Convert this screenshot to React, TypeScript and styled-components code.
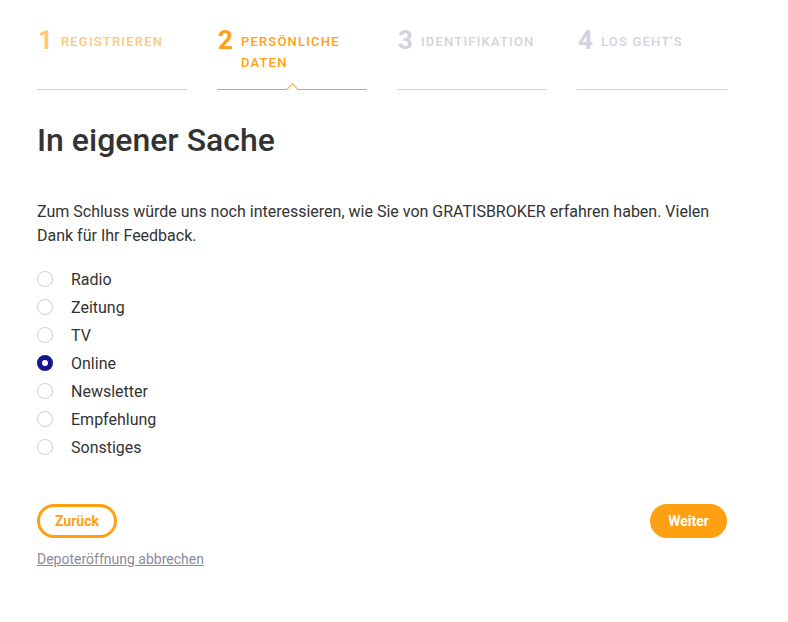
import React from "react";
import styled, { createGlobalStyle } from "styled-components";

const Global = createGlobalStyle`
  html, body { margin: 0; padding: 0; background: #fff; }
  body { font-family: Roboto, "Liberation Sans", Arial, sans-serif; color: #333; }
  * { box-sizing: border-box; }
`;

const Page = styled.div`
  width: 690px;
  margin-left: 37px;
  padding-top: 25px;
`;

const Steps = styled.div`
  display: grid;
  grid-template-columns: repeat(4, 150px);
  column-gap: 30px;
`;

type StepState = "done" | "active" | "todo";
const colorOf = (s: StepState) =>
  s === "active" ? "#ffa012" : s === "done" ? "#fcc978" : "#d4d2de";
const lineOf = (s: StepState) =>
  s === "active" ? "#ffa012" : s === "done" ? "#fcc978" : "#d4d2e0";

const Step = styled.div<{ $s: StepState }>`
  position: relative;
  display: flex;
  align-items: flex-start;
  gap: 8px;
  padding-bottom: 16px;
  border-bottom: 1px solid ${(p) => lineOf(p.$s)};
  color: ${(p) => colorOf(p.$s)};
`;

const Num = styled.span`
  font-size: 26px;
  font-weight: 700;
  line-height: 26px;
  flex: none;
  margin-top: 2px;
  margin-left: 1px;
`;

const Label = styled.span`
  font-size: 13px;
  font-weight: 500;
  letter-spacing: 1.2px;
  text-transform: uppercase;
  line-height: 21px;
  padding-top: 6px;
`;

const Caret = styled.span`
  position: absolute;
  left: 50%;
  bottom: -1px;
  width: 12px;
  height: 7px;
  margin-left: -6px;
  overflow: hidden;
  &::after {
    content: "";
    position: absolute;
    left: 2px;
    top: 2px;
    width: 8px;
    height: 8px;
    background: #fff;
    border-left: 1px solid #ffa012;
    border-top: 1px solid #ffa012;
    transform: rotate(45deg);
  }
`;

const Title = styled.h1`
  margin: 32px 0 0;
  font-size: 32px;
  font-weight: 500;
  line-height: 36px;
  color: #333;
`;

const Intro = styled.p`
  margin: 42px 0 0;
  font-size: 16px;
  line-height: 24px;
  color: #333;
  max-width: 690px;
`;

const Options = styled.div`
  display: flex;
  flex-direction: column;
  margin-top: 17px;
`;

const Option = styled.label`
  display: flex;
  align-items: center;
  height: 28px;
  font-size: 16px;
  color: #333;
`;

const Radio = styled.span<{ $on: boolean }>`
  width: 16px;
  height: 16px;
  border-radius: 50%;
  flex: none;
  margin-right: 18px;
  background: #fff;
  border: ${(p) => (p.$on ? "5px solid #14148c" : "1px solid #cfcdd8")};
`;

const Actions = styled.div`
  display: flex;
  justify-content: space-between;
  margin-top: 43px;
`;

const Button = styled.button<{ $primary?: boolean }>`
  height: 34px;
  padding: 0 15px;
  border-radius: 17px;
  font-family: Roboto, "Liberation Sans", Arial, sans-serif;
  font-size: 14px;
  font-weight: 700;
  cursor: pointer;
  border: 3px solid #ffa012;
  background: ${(p) => (p.$primary ? "#ffa012" : "#fff")};
  color: ${(p) => (p.$primary ? "#fff" : "#ffa012")};
`;

const Cancel = styled.a`
  display: inline-block;
  margin-top: 12px;
  font-size: 14px;
  line-height: 18px;
  color: #8c8a98;
  text-decoration: underline;
`;

const steps: { n: number; label: string; s: StepState }[] = [
  { n: 1, label: "Registrieren", s: "done" },
  { n: 2, label: "Persönliche Daten", s: "active" },
  { n: 3, label: "Identifikation", s: "todo" },
  { n: 4, label: "Los geht's", s: "todo" },
];

const options = ["Radio", "Zeitung", "TV", "Online", "Newsletter", "Empfehlung", "Sonstiges"];

export default function App() {
  return (
    <>
      <Global />
      <Page>
        <Steps>
          {steps.map((st) => (
            <Step key={st.n} $s={st.s}>
              <Num>{st.n}</Num>
              <Label>{st.label}</Label>
              {st.s === "active" && <Caret />}
            </Step>
          ))}
        </Steps>
        <Title>In eigener Sache</Title>
        <Intro>
          Zum Schluss würde uns noch interessieren, wie Sie von GRATISBROKER erfahren haben. Vielen
          Dank für Ihr Feedback.
        </Intro>
        <Options>
          {options.map((o) => (
            <Option key={o}>
              <Radio $on={o === "Online"} />
              {o}
            </Option>
          ))}
        </Options>
        <Actions>
          <Button>Zurück</Button>
          <Button $primary>Weiter</Button>
        </Actions>
        <Cancel href="#">Depoteröffnung abbrechen</Cancel>
      </Page>
    </>
  );
}
